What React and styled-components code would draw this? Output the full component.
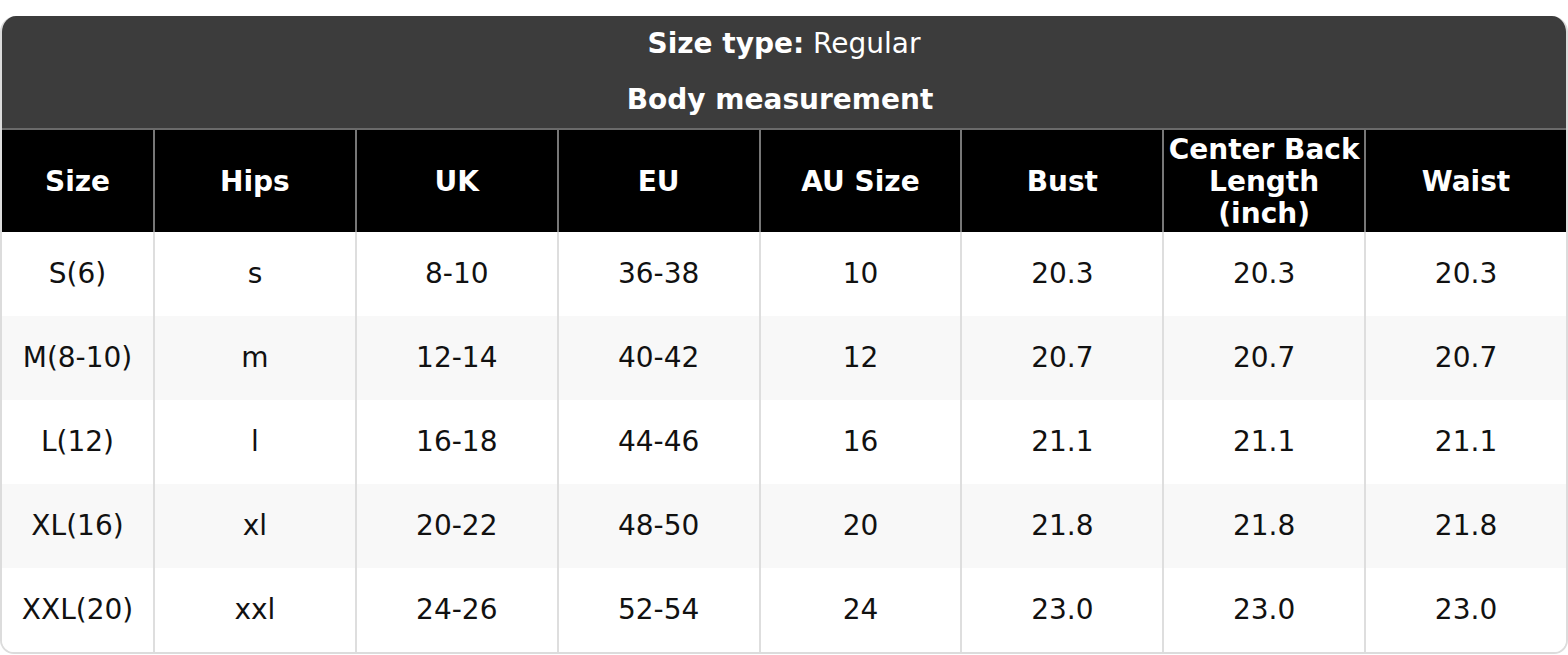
import React from "react";
import styled, { createGlobalStyle } from "styled-components";

const Global = createGlobalStyle`
  *, *::before, *::after { box-sizing: border-box; }
  html, body { margin: 0; padding: 0; background: #ffffff; }
  body { font-family: "DejaVu Sans", "Liberation Sans", sans-serif; }
`;

const Page = styled.div`
  padding-top: 16px;
`;

const Card = styled.div`
  width: 1568px;
  border: 2px solid #dcdcdc;
  border-top: none;
  border-radius: 16px 16px 14px 14px;
  overflow: hidden;
  background: #ffffff;
`;

const Banner = styled.div`
  background: #3c3c3c;
  color: #ffffff;
  border-bottom: 2px solid #6a6a6a;
  margin: 0 -2px;
`;

const BannerLine = styled.div`
  padding: 12px ${(p) => (p.$shift ? "8px" : "0")} 12px 0;
  line-height: 32px;
  font-size: 28px;
  text-align: center;
  font-weight: ${(p) => (p.$bold ? 700 : 400)};
`;

const Strong = styled.strong`
  font-weight: 700;
`;

const Table = styled.table`
  width: 100%;
  border-collapse: separate;
  border-spacing: 0;
  table-layout: fixed;
  font-size: 28px;
`;

const Th = styled.th`
  background: #000000;
  color: #ffffff;
  font-weight: 700;
  line-height: 32px;
  padding: 4px 4px 2px;
  height: 102px;
  text-align: center;
  vertical-align: middle;
  border-left: 2px solid #777777;
  width: ${(p) => p.$w || "auto"};
  &:first-child { border-left: none; }
`;

const Tr = styled.tr`
  background: ${(p) => (p.$alt ? "#f8f8f8" : "#ffffff")};
`;

const Td = styled.td`
  color: #111111;
  font-weight: 400;
  line-height: 32px;
  padding: 26px 4px;
  height: 84px;
  text-align: center;
  vertical-align: middle;
  border-left: 2px solid #dedede;
  &:first-child { border-left: none; }
`;

const columns = ["Size", "Hips", "UK", "EU", "AU Size", "Bust", "Center Back Length (inch)", "Waist"];

const rows = [
  ["S(6)", "s", "8-10", "36-38", "10", "20.3", "20.3", "20.3"],
  ["M(8-10)", "m", "12-14", "40-42", "12", "20.7", "20.7", "20.7"],
  ["L(12)", "l", "16-18", "44-46", "16", "21.1", "21.1", "21.1"],
  ["XL(16)", "xl", "20-22", "48-50", "20", "21.8", "21.8", "21.8"],
  ["XXL(20)", "xxl", "24-26", "52-54", "24", "23.0", "23.0", "23.0"],
];

export default function App() {
  return (
    <Page>
      <Global />
      <Card>
        <Banner>
          <BannerLine>
            <Strong>Size type:</Strong> Regular
          </BannerLine>
          <BannerLine $bold $shift>Body measurement</BannerLine>
        </Banner>
        <Table>
          <thead>
            <tr>
              {columns.map((c, i) => (
                <Th key={c} $w={i === 0 ? "151px" : undefined}>
                  {c}
                </Th>
              ))}
            </tr>
          </thead>
          <tbody>
            {rows.map((r, i) => (
              <Tr key={r[0]} $alt={i % 2 === 1}>
                {r.map((v, j) => (
                  <Td key={j}>{v}</Td>
                ))}
              </Tr>
            ))}
          </tbody>
        </Table>
      </Card>
    </Page>
  );
}
